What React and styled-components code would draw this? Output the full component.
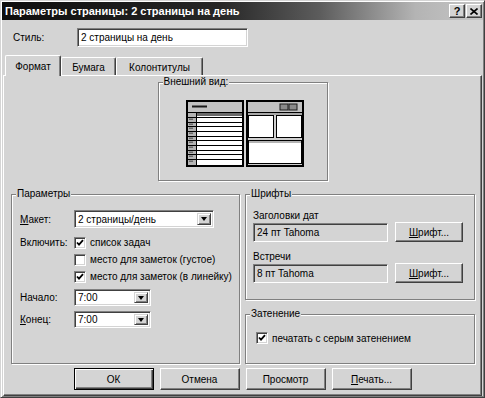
import React from "react";
import styled, { createGlobalStyle } from "styled-components";

const FACE = "#d4d4d4";

const GlobalStyle = createGlobalStyle`
  html, body {
    margin: 0;
    padding: 0;
    background: ${FACE};
  }
  body {
    font-family: "Liberation Sans", Arial, sans-serif;
    font-size: 10px;
    color: #000;
  }
`;

const Dialog = styled.div`
  box-sizing: border-box;
  width: 485px;
  height: 398px;
  background: ${FACE};
  border: 1px solid;
  border-color: ${FACE} #404040 #404040 ${FACE};
  box-shadow: inset 1px 1px 0 #fff, inset -1px -1px 0 #808080;
  display: flex;
  flex-direction: column;
`;

const TitleBar = styled.div`
  height: 18px;
  margin: 1px 1px 0;
  padding: 0 1px 0 3px;
  display: flex;
  align-items: center;
  justify-content: space-between;
  background: linear-gradient(
    to right,
    #0e0e0e 0%,
    #262626 45%,
    #5c5c5c 66%,
    #b4b4b4 86%,
    #c6c6c6 100%
  );
`;

const Title = styled.span`
  color: #fff;
  font-size: 11px;
  font-weight: bold;
`;

const CaptionButtons = styled.div`
  display: flex;
  gap: 1px;
`;

const CaptionButton = styled.div`
  box-sizing: border-box;
  width: 16px;
  height: 14px;
  background: ${FACE};
  border: 1px solid;
  border-color: #fff #404040 #404040 #fff;
  box-shadow: inset -1px -1px 0 #808080;
  display: flex;
  align-items: center;
  justify-content: center;
  font-size: 11px;
  font-weight: bold;
  line-height: 1;
`;

const StyleRow = styled.div`
  display: flex;
  align-items: center;
  height: 19px;
  margin: 8px 0 0 12px;
`;

const StyleLabel = styled.span`
  width: 64px;
`;

const Sunken = styled.div`
  box-sizing: border-box;
  width: ${({ $w }) => $w}px;
  height: ${({ $h }) => $h}px;
  background: ${({ $readOnly }) => ($readOnly ? FACE : "#fff")};
  border: 1px solid;
  border-color: #808080 #fff #fff #808080;
  box-shadow: inset 1px 1px 0 #404040, inset -1px -1px 0 ${FACE};
  display: flex;
  align-items: center;
  padding-left: 3px;
  white-space: nowrap;
  overflow: hidden;
`;

const TabStrip = styled.div`
  display: flex;
  align-items: flex-end;
  height: 20px;
  margin: 8px 0 0 4px;
`;

const Tab = styled.div`
  position: relative;
  z-index: ${({ $active }) => ($active ? 1 : 0)};
  box-sizing: border-box;
  width: ${({ $w }) => $w}px;
  height: ${({ $active }) => ($active ? 21 : 18)}px;
  margin-bottom: ${({ $active }) => ($active ? -1 : 0)}px;
  background: ${FACE};
  border: 1px solid;
  border-bottom: none;
  border-color: #fff #404040 #404040 #fff;
  border-radius: 2px 2px 0 0;
  box-shadow: inset -1px 0 0 #808080;
  display: flex;
  align-items: center;
  justify-content: center;
  padding-top: ${({ $active }) => ($active ? 0 : 1)}px;
`;

const Panel = styled.div`
  box-sizing: border-box;
  height: 321px;
  margin: 0 2px;
  border: 1px solid;
  border-color: #fff #404040 #404040 #fff;
  box-shadow: inset -1px -1px 0 #808080;
  display: flex;
  flex-direction: column;
`;

const Group = styled.fieldset`
  box-sizing: border-box;
  margin: 0;
  padding: 0;
  min-width: 0;
  width: ${({ $w }) => ($w ? `${$w}px` : "auto")};
  height: ${({ $h }) => $h}px;
  border: 1px solid #808080;
  box-shadow: inset 1px 1px 0 #fff, 1px 1px 0 #fff;
`;

const Legend = styled.legend`
  margin-left: 4px;
  padding: 0 1px;
  line-height: 12px;
  background: ${FACE};
`;

const GroupBody = styled.div`
  display: flex;
  flex-direction: column;
  padding: ${({ $pad }) => $pad};
`;

const AppearanceGroup = styled(Group)`
  align-self: center;
`;

const PreviewWrap = styled.div`
  display: flex;
  justify-content: center;
  padding: 12px 0 0 5px;
`;

const Columns = styled.div`
  display: grid;
  grid-template-columns: 229px 230px;
  column-gap: 5px;
  margin: 7px 0 0 7px;
`;

const RightColumn = styled.div`
  display: flex;
  flex-direction: column;
  gap: 8px;
`;

const Row = styled.div`
  display: flex;
  align-items: center;
  height: ${({ $h }) => $h}px;
  margin-top: ${({ $mt }) => $mt || 0}px;
`;

const RowLabel = styled.span`
  width: 54px;
  flex-shrink: 0;
`;

const Key = styled.span`
  text-decoration: underline;
`;

const ComboBox = styled.div`
  box-sizing: border-box;
  width: ${({ $w }) => $w}px;
  height: ${({ $h }) => $h}px;
  background: #fff;
  border: 1px solid;
  border-color: #808080 #fff #fff #808080;
  box-shadow: inset 1px 1px 0 #404040, inset -1px -1px 0 ${FACE};
  display: flex;
  align-items: stretch;
  padding: 2px 2px 2px 3px;
`;

const ComboText = styled.span`
  flex: 1;
  display: flex;
  align-items: center;
  white-space: nowrap;
`;

const DropButton = styled.span`
  box-sizing: border-box;
  width: 14px;
  background: ${FACE};
  border: 1px solid;
  border-color: ${FACE} #404040 #404040 ${FACE};
  box-shadow: inset 1px 1px 0 #fff, inset -1px -1px 0 #808080;
  display: flex;
  align-items: center;
  justify-content: center;
`;

const Arrow = styled.span`
  width: 0;
  height: 0;
  border-left: 3.5px solid transparent;
  border-right: 3.5px solid transparent;
  border-top: 4px solid #000;
`;

const CheckRow = styled.label`
  display: flex;
  align-items: center;
  gap: 4px;
  white-space: nowrap;
`;

const Box = styled.span`
  box-sizing: border-box;
  width: 12px;
  height: 12px;
  background: #fff;
  border: 1px solid;
  border-color: #808080 #fff #fff #808080;
  box-shadow: inset 1px 1px 0 #404040, inset -1px -1px 0 ${FACE};
  display: flex;
  align-items: center;
  justify-content: center;
`;

const FieldLabel = styled.div`
  line-height: 12px;
  margin-top: ${({ $mt }) => $mt || 0}px;
`;

const FontRow = styled.div`
  display: flex;
  align-items: center;
  gap: 7px;
  height: 20px;
`;

const Button = styled.div`
  box-sizing: border-box;
  width: ${({ $w }) => $w}px;
  height: ${({ $h }) => $h}px;
  background: ${FACE};
  border: 1px solid;
  border-color: ${({ $default }) =>
    $default ? "#000" : `#fff #404040 #404040 #fff`};
  box-shadow: ${({ $default }) =>
    $default
      ? "inset 1px 1px 0 #fff, inset -1px -1px 0 #404040, inset -2px -2px 0 #808080"
      : "inset -1px -1px 0 #808080"};
  display: flex;
  align-items: center;
  justify-content: center;
`;

const ButtonRow = styled.div`
  display: flex;
  justify-content: center;
  gap: 6px;
  margin-top: 4px;
`;

function Check({ checked }) {
  return (
    <Box>
      {checked ? (
        <svg width="8" height="8" viewBox="0 0 8 8">
          <path d="M1 3.5 L3 5.6 L7 1.2" fill="none" stroke="#000" strokeWidth="1.8" />
        </svg>
      ) : null}
    </Box>
  );
}

function Combo({ w, h, value }) {
  return (
    <ComboBox $w={w} $h={h}>
      <ComboText>{value}</ComboText>
      <DropButton>
        <Arrow />
      </DropButton>
    </ComboBox>
  );
}

const dayRows = [17, 22, 26, 31, 36, 40, 45, 50, 54, 59];

function LayoutPreview() {
  return (
    <svg width="118" height="68" viewBox="0 0 118 68">
      {/* day page */}
      <rect x="1" y="1" width="56" height="65" fill="#fff" stroke="#000" strokeWidth="2" />
      <rect x="2" y="2" width="54" height="10" fill="#c2c2c2" />
      <line x1="6" y1="6.5" x2="21" y2="6.5" stroke="#1a1a1a" strokeWidth="2" />
      <rect x="2" y="12" width="54" height="1" fill="#000" />
      <rect x="2" y="13" width="8" height="52" fill="#b4b4b4" />
      <rect x="10" y="13" width="46" height="3" fill="#6a6a6a" />
      <line x1="10.5" y1="13" x2="10.5" y2="65" stroke="#000" />
      {dayRows.map((y) => (
        <line key={y} x1="2" y1={y + 0.5} x2="56" y2={y + 0.5} stroke="#000" />
      ))}
      {dayRows.map((y) => (
        <rect key={`h${y}`} x="3" y={y + 1.5} width="4" height="1.5" fill="#6a6a6a" />
      ))}
      {/* tasks / notes page */}
      <g transform="translate(60 0)">
        <rect x="1" y="1" width="56" height="65" fill="#cfcfcf" stroke="#000" strokeWidth="2" />
        <rect x="2" y="2" width="54" height="10" fill="#c2c2c2" />
        <rect x="34" y="4" width="8" height="6" fill="#8a8a8a" stroke="#1a1a1a" />
        <rect x="43" y="4" width="8" height="6" fill="#8a8a8a" stroke="#1a1a1a" />
        <rect x="2" y="12" width="54" height="1" fill="#000" />
        <rect x="2" y="13" width="54" height="2" fill="#a8a8a8" />
        <rect x="2.5" y="15.5" width="25" height="22" fill="#fff" stroke="#000" />
        <rect x="30.5" y="15.5" width="25" height="22" fill="#fff" stroke="#000" />
        <rect x="2.5" y="40.5" width="53" height="23" fill="#fff" stroke="#000" />
        <rect x="3" y="41" width="52" height="2" fill="#b4b4b4" />
      </g>
    </svg>
  );
}

function CloseGlyph() {
  return (
    <svg width="8" height="7" viewBox="0 0 8 7">
      <path d="M0.5 0.5 L7.5 6.5 M7.5 0.5 L0.5 6.5" stroke="#000" strokeWidth="1.6" />
    </svg>
  );
}

export default function App() {
  return (
    <>
      <GlobalStyle />
      <Dialog>
        <TitleBar>
          <Title>Параметры страницы: 2 страницы на день</Title>
          <CaptionButtons>
            <CaptionButton>?</CaptionButton>
            <CaptionButton>
              <CloseGlyph />
            </CaptionButton>
          </CaptionButtons>
        </TitleBar>

        <StyleRow>
          <StyleLabel>Стиль:</StyleLabel>
          <Sunken $w={171} $h={19}>
            2 страницы на день
          </Sunken>
        </StyleRow>

        <TabStrip>
          <Tab $active $w={56}>
            Формат
          </Tab>
          <Tab $w={55}>Бумага</Tab>
          <Tab $w={87}>Колонтитулы</Tab>
        </TabStrip>

        <Panel>
          <AppearanceGroup $w={170} $h={105}>
            <Legend>Внешний вид:</Legend>
            <PreviewWrap>
              <LayoutPreview />
            </PreviewWrap>
          </AppearanceGroup>

          <Columns>
            <Group $h={176}>
              <Legend>Параметры</Legend>
              <GroupBody $pad="10px 0 0 8px">
                <Row $h={18}>
                  <RowLabel>
                    <Key>М</Key>акет:
                  </RowLabel>
                  <Combo w={140} h={18} value="2 страницы/день" />
                </Row>
                <Row $h={17} $mt={6}>
                  <RowLabel>Включить:</RowLabel>
                  <CheckRow>
                    <Check checked />
                    список задач
                  </CheckRow>
                </Row>
                <Row $h={17}>
                  <RowLabel />
                  <CheckRow>
                    <Check />
                    место для заметок (густое)
                  </CheckRow>
                </Row>
                <Row $h={17}>
                  <RowLabel />
                  <CheckRow>
                    <Check checked />
                    место для заметок (в линейку)
                  </CheckRow>
                </Row>
                <Row $h={17} $mt={4}>
                  <RowLabel>Начало:</RowLabel>
                  <Combo w={77} h={17} value="7:00" />
                </Row>
                <Row $h={17} $mt={5}>
                  <RowLabel>
                    <Key>К</Key>онец:
                  </RowLabel>
                  <Combo w={77} h={17} value="7:00" />
                </Row>
              </GroupBody>
            </Group>

            <RightColumn>
              <Group $h={112}>
                <Legend>Шрифты</Legend>
                <GroupBody $pad="10px 0 0 7px">
                  <FieldLabel>Заголовки дат</FieldLabel>
                  <FontRow>
                    <Sunken $readOnly $w={135} $h={19}>
                      24 пт Tahoma
                    </Sunken>
                    <Button $w={68} $h={20}>
                      <span>
                        <Key>Ш</Key>рифт...
                      </span>
                    </Button>
                  </FontRow>
                  <FieldLabel $mt={9}>Встречи</FieldLabel>
                  <FontRow>
                    <Sunken $readOnly $w={135} $h={19}>
                      8 пт Tahoma
                    </Sunken>
                    <Button $w={68} $h={20}>
                      <span>
                        <Key>Ш</Key>рифт...
                      </span>
                    </Button>
                  </FontRow>
                </GroupBody>
              </Group>

              <Group $h={56}>
                <Legend>Затенение</Legend>
                <GroupBody $pad="12px 0 0 10px">
                  <CheckRow>
                    <Check checked />
                    печатать с серым затенением
                  </CheckRow>
                </GroupBody>
              </Group>
            </RightColumn>
          </Columns>

          <ButtonRow>
            <Button $default $w={80} $h={22}>
              ОК
            </Button>
            <Button $w={80} $h={22}>
              Отмена
            </Button>
            <Button $w={80} $h={22}>
              Просмотр
            </Button>
            <Button $w={80} $h={22}>
              <span>
                <Key>П</Key>ечать...
              </span>
            </Button>
          </ButtonRow>
        </Panel>
      </Dialog>
    </>
  );
}
